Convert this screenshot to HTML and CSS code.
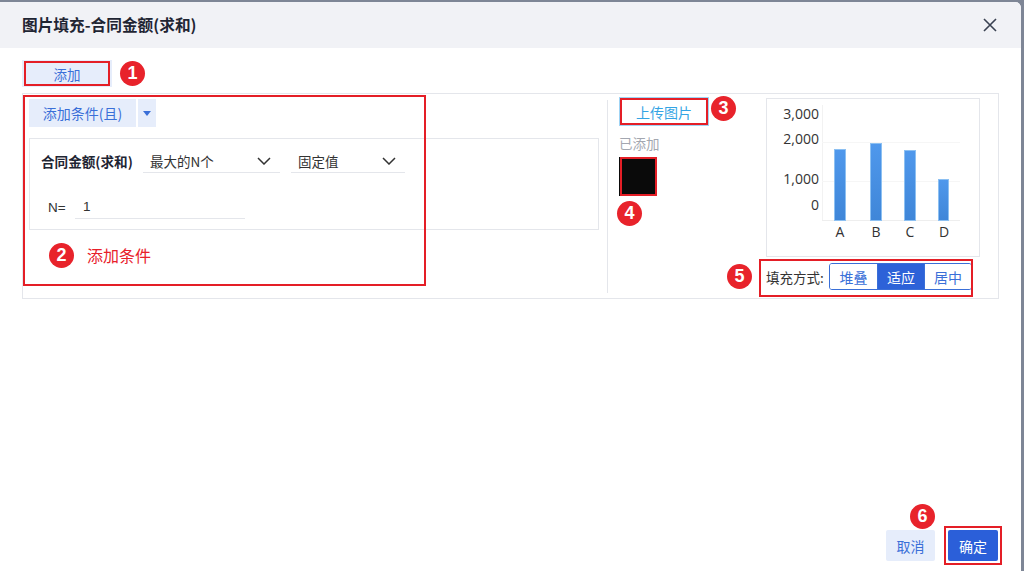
FILE: index.html
```html
<!DOCTYPE html>
<html lang="zh">
<head>
<meta charset="utf-8">
<title>图片填充</title>
<link rel="stylesheet" href="styles.css">
</head>
<body>
<div class="dialog">
  <div class="header">
    <div class="title">图片填充-合同金额(求和)</div>
    <svg class="close" width="14" height="14" viewBox="0 0 14 14"><path d="M1 1L13 13M13 1L1 13" stroke="#3a4252" stroke-width="1.6" fill="none"/></svg>
  </div>
  <div class="body">
    <div class="toolbar"><button class="btn-light add">添加</button></div>
    <div class="panel">
      <div class="left">
        <div class="cond-bar">
          <button class="btn-light cond">添加条件(且)</button>
          <button class="btn-light caret"><svg width="8" height="5" viewBox="0 0 8 5"><path d="M0 0H8L4 5Z" fill="#3a6fd8"/></svg></button>
        </div>
        <div class="card">
          <div class="row">
            <span class="field">合同金额(求和)</span>
            <div class="select s1"><span>最大的N个</span><svg width="14" height="8" viewBox="0 0 14 8"><path d="M1 1L7 7L13 1" stroke="#333" stroke-width="1.5" fill="none"/></svg></div>
            <div class="select s2"><span>固定值</span><svg width="14" height="8" viewBox="0 0 14 8"><path d="M1 1L7 7L13 1" stroke="#333" stroke-width="1.5" fill="none"/></svg></div>
          </div>
          <div class="row row2">
            <span class="nlabel">N=</span>
            <div class="input">1</div>
          </div>
        </div>
        <div class="add-cond">添加条件</div>
      </div>
      <div class="divider"></div>
      <div class="upload">
        <button class="btn-upload">上传图片</button>
        <div class="added">已添加</div>
        <div class="thumb"></div>
      </div>
      <div class="right">
        <div class="chart">
          <svg width="212" height="157" viewBox="0 0 212 157">
            <g font-family="'Open Sans','Noto Sans',sans-serif" font-size="14" fill="#333" text-anchor="end">
              <text x="52" y="20">3,000</text>
              <text x="52" y="45">2,000</text>
              <text x="52" y="85">1,000</text>
              <text x="52" y="111">0</text>
            </g>
            <line x1="55.5" y1="6" x2="55.5" y2="122" stroke="#f2f2f2"/>
            <line x1="55" y1="43.5" x2="193" y2="43.5" stroke="#f6f6f6"/>
            <line x1="55" y1="82.5" x2="193" y2="82.5" stroke="#f6f6f6"/>
            <line x1="55" y1="121.5" x2="193" y2="121.5" stroke="#eeeeee"/>
            <defs>
              <linearGradient id="bg" x1="0" y1="0" x2="0" y2="1">
                <stop offset="0" stop-color="#4f98ec"/>
                <stop offset="1" stop-color="#3f86d8"/>
              </linearGradient>
            </defs>
            <g fill="url(#bg)" stroke="#8cc0f2" stroke-width="1">
              <rect x="67.5" y="50.5" width="11" height="71"/>
              <rect x="103.5" y="44.5" width="11" height="77"/>
              <rect x="137.5" y="51.5" width="11" height="70"/>
              <rect x="171.5" y="80.5" width="10" height="41"/>
            </g>
            <g font-family="'Open Sans','Noto Sans',sans-serif" font-size="14" fill="#333" text-anchor="middle">
              <text x="73" y="138">A</text>
              <text x="109" y="138">B</text>
              <text x="143" y="138">C</text>
              <text x="177" y="138">D</text>
            </g>
          </svg>
        </div>
        <div class="fill-row">
          <span class="fill-label">填充方式:</span>
          <div class="seg">
            <span class="seg-item">堆叠</span>
            <span class="seg-item active">适应</span>
            <span class="seg-item">居中</span>
          </div>
        </div>
      </div>
    </div>
  </div>
  <div class="footer">
    <button class="btn-light cancel">取消</button>
    <button class="btn-primary">确定</button>
  </div>

  <div class="mark m1"></div>
  <div class="mark m2"></div>
  <div class="mark m3"></div>
  <div class="mark m4"></div>
  <div class="mark m5"></div>
  <div class="mark m6"></div>
  <div class="badge b1">1</div>
  <div class="badge b2">2</div>
  <div class="badge b3">3</div>
  <div class="badge b4">4</div>
  <div class="badge b5">5</div>
  <div class="badge b6">6</div>
</div>
</body>
</html>
```
FILE: styles.css
```css
* { box-sizing: border-box; }
html, body { margin: 0; padding: 0; }
body {
  background: #7e8696;
  width: 1024px;
  height: 571px;
  overflow: hidden;
  font-family: "Noto Sans CJK SC", "Noto Sans", sans-serif;
  color: #333;
}
button {
  font-family: inherit;
  border: none;
  padding: 0;
  cursor: pointer;
}
.dialog {
  position: relative;
  margin-top: 2px;
  width: 1021px;
  height: 569px;
  background: #fff;
  border-top-right-radius: 6px;
  display: flex;
  flex-direction: column;
  overflow: hidden;
}
.header {
  height: 46px;
  background: #f1f2f6;
  display: flex;
  align-items: center;
  justify-content: space-between;
  padding: 0 24px 0 22px;
  flex: none;
}
.title {
  font-size: 15.7px;
  font-weight: 700;
  color: #1f2533;
  line-height: 20px;
}
.close { display: block; }
.body {
  flex: 1;
  padding: 12px 22px 0 22px;
}
.toolbar { display: flex; }
.btn-light {
  background: #e6edfb;
  color: #3a6fd8;
  font-size: 14px;
}
.add {
  width: 90px;
  height: 27px;
  font-size: 13.5px;
}
.panel {
  margin-top: 6px;
  width: 977px;
  height: 206px;
  border: 1px solid #e4e6eb;
  display: flex;
}
.left {
  width: 584px;
  padding: 5px 8px 0 6px;
  flex: none;
}
.cond-bar { display: flex; gap: 2px; }
.cond {
  width: 107px;
  height: 28px;
}
.caret {
  width: 18px;
  height: 28px;
  display: flex;
  align-items: center;
  justify-content: center;
}
.card {
  margin-top: 11px;
  width: 570px;
  height: 92px;
  border: 1px solid #e4e6eb;
  padding: 0 0 0 11px;
}
.row {
  display: flex;
  align-items: center;
  height: 24px;
  margin-top: 10px;
}
.row2 { margin-top: 22px; }
.field {
  font-size: 13.6px;
  font-weight: 700;
  color: #1f2533;
  width: 102px;
}
.select {
  height: 24px;
  border-bottom: 1px solid #e4e6eb;
  display: flex;
  align-items: center;
  justify-content: space-between;
  padding: 0 9px 0 7px;
  font-size: 13.5px;
  color: #333;
}
.s1 { width: 137px; }
.s2 { width: 114px; margin-left: 11px; }
.nlabel {
  font-size: 13.5px;
  width: 34px;
  padding-left: 7px;
  color: #333;
  font-family: "Liberation Sans", "Noto Sans CJK SC", sans-serif;
}
.input {
  width: 170px;
  height: 24px;
  border-bottom: 1px solid #e4e6eb;
  padding-left: 8px;
  font-size: 13.5px;
  line-height: 24px;
  font-family: "Liberation Sans", sans-serif;
  color: #333;
}
.add-cond {
  margin-top: 15px;
  padding-left: 58px;
  line-height: 20px;
  font-size: 16px;
  color: #e8202a;
}
.divider {
  width: 1px;
  background: #e4e6eb;
  margin: 6px 0 5px;
  flex: none;
}
.upload {
  width: 158px;
  padding: 3px 0 0 12px;
  flex: none;
}
.btn-upload {
  width: 90px;
  height: 29px;
  border: 1px solid #9fd4f5;
  background: #fff;
  color: #34a4e4;
  font-size: 14px;
  margin-left: -1px;
}
.added {
  margin-top: 7px;
  margin-left: -1px;
  line-height: 20px;
  font-size: 13.5px;
  color: #a3a7b0;
}
.thumb {
  margin-top: 4px;
  margin-left: -1px;
  width: 38px;
  height: 39px;
  background: #0a0a0a;
}
.right {
  padding-top: 4px;
  width: 214px;
  flex: none;
}
.chart {
  width: 214px;
  height: 159px;
  border: 1px solid #e4e6eb;
}
.chart svg { display: block; }
.fill-row {
  margin-top: 6px;
  display: flex;
  align-items: center;
  height: 27px;
}
.fill-label {
  font-size: 13.5px;
  color: #333;
  width: 63px;
}
.seg {
  display: flex;
  border: 1px solid #3a6fd8;
  border-radius: 3px;
  overflow: hidden;
  height: 27px;
}
.seg-item {
  width: 47px;
  display: flex;
  align-items: center;
  justify-content: center;
  font-size: 14px;
  color: #3a6fd8;
  background: #fff;
}
.seg-item + .seg-item { border-left: 1px solid #3a6fd8; }
.seg-item.active {
  background: #2d62d8;
  color: #fff;
}
.footer {
  display: flex;
  justify-content: flex-end;
  padding: 0 23px 10px 0;
  gap: 13px;
  flex: none;
}
.cancel {
  width: 49px;
  height: 31px;
  border-radius: 2px;
}
.btn-primary {
  width: 50px;
  height: 31px;
  border-radius: 2px;
  background: #2b5fd9;
  color: #fff;
  font-size: 14px;
}
.mark {
  position: absolute;
  border: 2px solid #e41e26;
}
.m1 { left: 24px; top: 59px; width: 86px; height: 25px; }
.m2 { left: 23px; top: 93px; width: 403px; height: 191px; }
.m3 { left: 620px; top: 96px; width: 88px; height: 27px; }
.m4 { left: 620px; top: 155px; width: 37px; height: 39px; }
.m5 { left: 759px; top: 257px; width: 214px; height: 38px; }
.m6 { left: 944px; top: 524px; width: 58px; height: 39px; }
.badge {
  position: absolute;
  width: 25px;
  height: 25px;
  border-radius: 50%;
  background: #e8232b;
  color: #fff;
  font-family: "Liberation Sans", Arial, sans-serif;
  font-weight: 700;
  font-size: 18px;
  line-height: 25px;
  text-align: center;
}
.b1 { left: 120px; top: 59px; }
.b2 { left: 49px; top: 241px; }
.b3 { left: 711px; top: 94px; }
.b4 { left: 617px; top: 199px; }
.b5 { left: 727px; top: 262px; }
.b6 { left: 910px; top: 502px; }
```
